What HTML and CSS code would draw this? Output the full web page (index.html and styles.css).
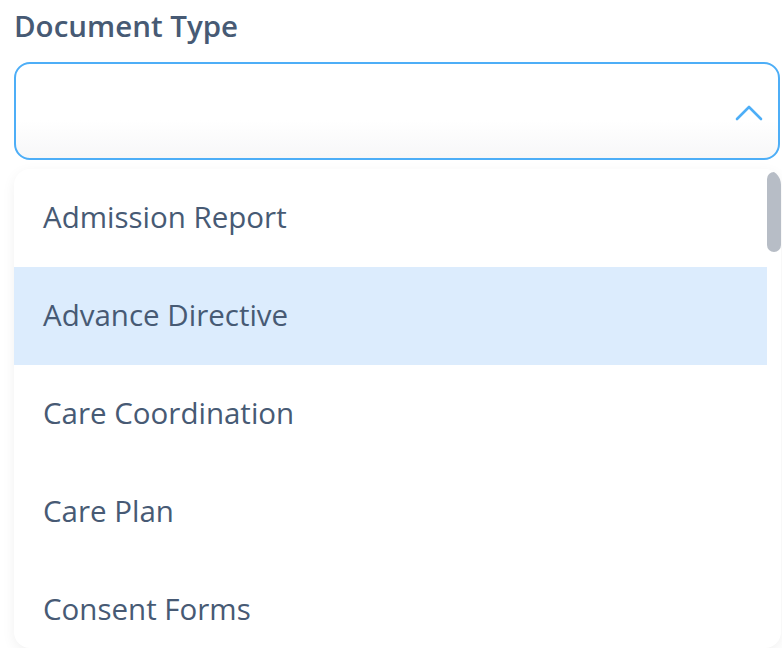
FILE: index.html
```html
<!DOCTYPE html>
<html lang="en">
<head>
  <meta charset="UTF-8">
  <title>Document Type</title>
  <link rel="stylesheet" href="styles.css">
</head>
<body>

  <div class="field">
    <div class="label">Document Type</div>

    <div class="select">
      <svg class="chevron" width="28" height="16" viewBox="0 0 28 16">
        <polyline points="2,14 14,2 26,14" fill="none" stroke="#4daef7" stroke-width="2.6" stroke-linecap="round" stroke-linejoin="round"/>
      </svg>
    </div>

    <div class="menu">
      <ul class="options">
        <li>Admission Report</li>
        <li class="active">Advance Directive</li>
        <li>Care Coordination</li>
        <li>Care Plan</li>
        <li>Consent Forms</li>
      </ul>
      <div class="track"><div class="thumb"></div></div>
    </div>
  </div>

</body>
</html>
```

FILE: styles.css
```css
body {
  margin: 0;
  background-color: #fff;
  font-family: 'Open Sans', 'Noto Sans', sans-serif;
  color: #475a74;
}
.field {
  width: 767px;
  padding: 7px 0 0 14px;
}
.label {
  font-size: 29.5px;
  font-weight: 600;
  line-height: 38px;
  margin-bottom: 17px;
}
.select {
  box-sizing: border-box;
  width: 766px;
  height: 98px;
  border: 2px solid #4daef7;
  border-radius: 16px;
  background: linear-gradient(#fff 60%, #f7f7f8);
  display: flex;
  align-items: center;
  justify-content: flex-end;
  padding-right: 15px;
}
.chevron {
  margin-top: 4px;
}
.menu {
  margin-top: 9px;
  height: 479px;
  border-radius: 16px;
  background-color: #fff;
  box-shadow: 0 4px 14px rgba(0, 0, 0, 0.06);
  overflow: hidden;
  display: flex;
}
.options {
  list-style: none;
  margin: 0;
  padding: 0;
  flex: 1;
}
.options li {
  height: 98px;
  line-height: 96px;
  padding-left: 29px;
  font-size: 29.5px;
}
.options li.active {
  background-color: #dcecfd;
}
.track {
  width: 14px;
  padding-top: 3px;
}
.thumb {
  height: 80px;
  background-color: #b7bdc6;
  border-radius: 7px;
}
```
